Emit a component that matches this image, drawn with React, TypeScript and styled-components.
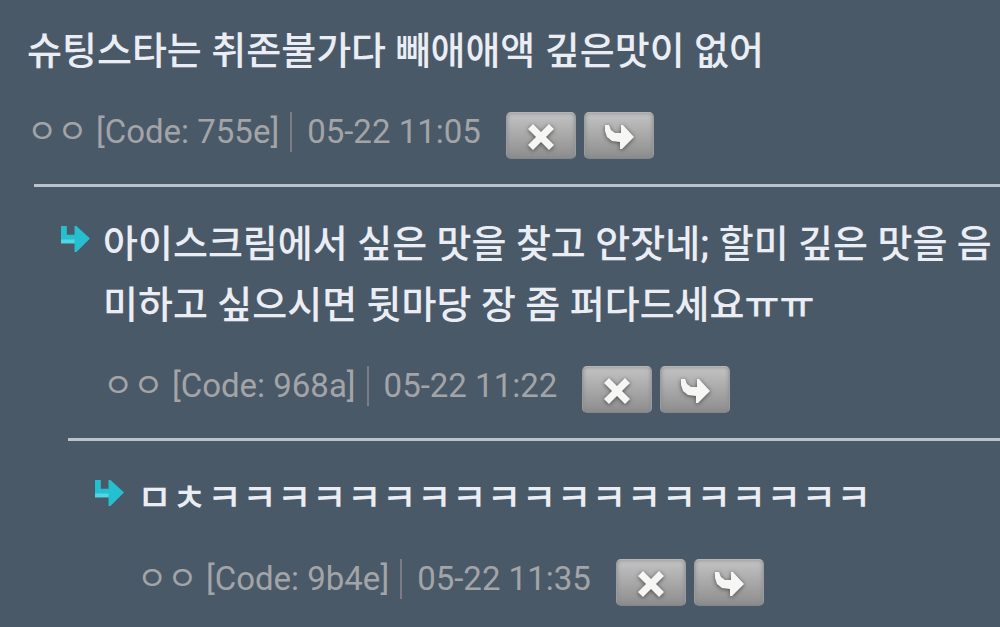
import React from 'react';
import styled, { createGlobalStyle } from 'styled-components';

const GlobalStyle = createGlobalStyle`
  html {
    background: #4a5968;
  }
  body {
    margin: 0;
    background: #4a5968;
    font-family: Roboto, 'Noto Sans CJK KR', sans-serif;
    overflow-x: hidden;
  }
`;

const Thread = styled.main`
  padding: 21px 0 16px;
`;

const Item = styled.article<{ $depth: number }>`
  margin-left: ${(p) => p.$depth * 34}px;
  padding: ${(p) => (p.$depth ? '27px 0 25px 27px' : '0 0 25px 27px')};
  display: flex;
  gap: 13px;
`;

const Divider = styled.hr<{ $depth: number }>`
  height: 3px;
  margin: 0 0 0 ${(p) => p.$depth * 34}px;
  border: 0;
  background: #bcc3cd;
`;

const ReplyMark = styled.svg`
  flex: none;
  width: 29px;
  height: 27px;
  margin-top: 12px;
`;

const Content = styled.div`
  flex: 1;
  min-width: 0;
`;

const Message = styled.p`
  margin: 0 0 30px;
  font-size: 38px;
  font-weight: 500;
  line-height: 61px;
  color: #eaeef4;
`;

const Meta = styled.footer`
  display: flex;
  align-items: flex-start;
  height: 47px;
  font-size: 33px;
  line-height: 40px;
  white-space: nowrap;
  color: #a3a4a8;
`;

const Stamp = styled.time`
  margin-left: 11px;
  padding-left: 15px;
  border-left: 2px solid #7c7d84;
`;

const Actions = styled.div`
  display: flex;
  gap: 8px;
  margin-left: 25px;
`;

const ActionButton = styled.button`
  display: grid;
  place-items: center;
  width: 70px;
  height: 47px;
  padding: 0;
  border: 1px solid #9b9c9e;
  border-top-color: #b4b5b7;
  border-bottom-color: #858688;
  border-radius: 5px;
  background: linear-gradient(#c3c3c3, #ababab 45%, #8d8d8d);
  box-shadow: inset 0 0 4px #85888c;
  cursor: pointer;

  svg {
    width: 36px;
    height: 34px;
    margin-top: 2px;
    filter: drop-shadow(0 1px 2px #4c4c4c);
  }
`;

const CrossIcon = () => (
  <svg viewBox="0 0 36 34" aria-hidden="true">
    <path
      d="M10 4 L18 12 L26 4 L31 9 L23 17 L31 25 L26 30 L18 22 L10 30 L5 25 L13 17 L5 9 Z"
      fill="#f6f6f5"
    />
  </svg>
);

const ReplyIcon = () => (
  <svg viewBox="0 0 36 34" aria-hidden="true">
    <path
      d="M4 5 L8 5 L10 10 L14 13 L20 13 L20 5 L22 5 L33 17 L21 29 L19 29 L19 22 L11 21 L6 17 L4 11 Z"
      fill="#f6f6f5"
    />
  </svg>
);

interface CommentData {
  depth: number;
  text: string;
  code: string;
  time: string;
}

const comments: CommentData[] = [
  { depth: 0, text: '슈팅스타는 취존불가다 빼애애액 깊은맛이 없어', code: '755e', time: '05-22 11:05' },
  {
    depth: 1,
    text: '아이스크림에서 싶은 맛을 찾고 안잣네; 할미 깊은 맛을 음미하고 싶으시면 뒷마당 장 좀 퍼다드세요ㅠㅠ',
    code: '968a',
    time: '05-22 11:22',
  },
  { depth: 2, text: 'ㅁㅊㅋㅋㅋㅋㅋㅋㅋㅋㅋㅋㅋㅋㅋㅋㅋㅋㅋㅋㅋ', code: '9b4e', time: '05-22 11:35' },
];

const Comment = ({ depth, text, code, time }: CommentData) => (
  <>
    {depth > 0 && <Divider $depth={depth} />}
    <Item $depth={depth}>
      {depth > 0 && (
        <ReplyMark viewBox="0 0 30 28" aria-hidden="true">
          <path d="M0 0 H6 V9 H14 V0 H16 L30 13 L16 27 H14 V18 H0 Z" fill="#25bfd0" />
          <path d="M0 14 H14 V18 H0 Z" fill="#52d6e2" />
        </ReplyMark>
      )}
      <Content>
        <Message>{text}</Message>
        <Meta>
          <span>ㅇㅇ [Code: {code}]</span>
          <Stamp>{time}</Stamp>
          <Actions>
            <ActionButton type="button" aria-label="삭제">
              <CrossIcon />
            </ActionButton>
            <ActionButton type="button" aria-label="답글">
              <ReplyIcon />
            </ActionButton>
          </Actions>
        </Meta>
      </Content>
    </Item>
  </>
);

export default function App() {
  return (
    <>
      <GlobalStyle />
      <Thread>
        {comments.map((c) => (
          <Comment key={c.code} {...c} />
        ))}
      </Thread>
    </>
  );
}
